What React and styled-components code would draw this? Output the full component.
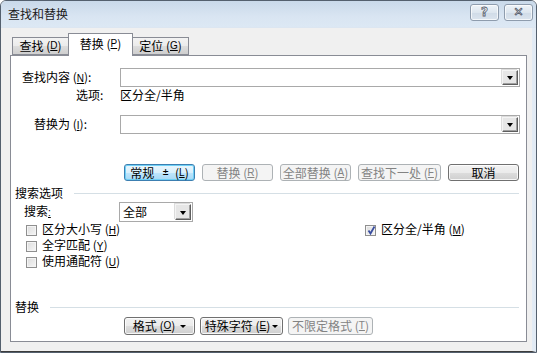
import React from "react";
import styled, { createGlobalStyle, css } from "styled-components";

const Global = createGlobalStyle`
  html, body { margin: 0; padding: 0; background: #ffffff; }
  body { font-family: "Noto Sans CJK SC", "Liberation Sans", sans-serif; font-size: 12px; color: #000; }
  * { box-sizing: border-box; }
`;

const Window = styled.div`
  width: 537px;
  height: 353px;
  border: 1px solid #54606e;
  border-radius: 6px 6px 0 0;
  background: #f0f0f0;
  display: flex;
  flex-direction: column;
  overflow: hidden;
`;

const TitleBar = styled.div`
  height: 27px;
  flex: none;
  display: flex;
  align-items: center;
  justify-content: space-between;
  padding: 0 3px 0 7px;
  background: linear-gradient(#c9d9ea, #d9e5f2 60%, #dce8f4);
  border-bottom: 1px solid #dce6f1;
`;

const Title = styled.span`
  font-size: 12px;
  line-height: 14px;
  color: #1b1b1b;
`;

const Controls = styled.div`
  display: flex;
  gap: 5px;
  margin-top: -4px;
`;

const CtrlBtn = styled.div`
  width: 29px;
  height: 17px;
  border: 1px solid #8e9cad;
  border-radius: 3px;
  background: linear-gradient(#eef3f8, #dde6ef 50%, #d0dbe7 51%, #dbe4ee);
  box-shadow: inset 0 0 0 1px rgba(255,255,255,0.7);
  display: flex;
  align-items: center;
  justify-content: center;
  font-family: "DejaVu Sans", sans-serif;
  font-weight: bold;
  font-size: 12px;
  color: #f4f6f9;
  -webkit-text-stroke: 0.8px #5a6270;
`;

const Client = styled.div`
  flex: 1;
  display: flex;
  flex-direction: column;
  padding: 4px 5px 9px 9px;
  border-right: 4px solid #e2ebf5;
  border-bottom: 1px solid #3c3c3c;
`;

const TabStrip = styled.div`
  display: flex;
  align-items: flex-end;
  padding-left: 2px;
  height: 23px;
  position: relative;
  z-index: 1;
`;

const Tab = styled.div`
  height: ${(p) => (p.$active ? "23px" : "18px")};
  width: ${(p) => p.$w}px;
  border: 1px solid #898c95;
  border-bottom: ${(p) => (p.$active ? "none" : "1px solid #898c95")};
  margin-left: ${(p) => (p.$active ? "-1px" : "0")};
  margin-right: ${(p) => (p.$active ? "-1px" : "0")};
  margin-bottom: ${(p) => (p.$active ? "-1px" : "0")};
  background: ${(p) => (p.$active ? "#ffffff" : "linear-gradient(#f3f3f3, #ebebeb 50%, #dddddd 51%, #cfcfcf)")};
  display: flex;
  align-items: ${(p) => (p.$active ? "flex-start" : "center")};
  justify-content: center;
  padding-top: ${(p) => (p.$active ? "3px" : "0")};
  font-size: 12px;
  line-height: 14px;
  z-index: ${(p) => (p.$active ? 2 : 1)};
  position: relative;
`;

const Panel = styled.div`
  flex: 1;
  border: 1px solid #898c95;
  background: #ffffff;
  display: flex;
  flex-direction: column;
`;

const FieldRow = styled.div`
  display: flex;
  align-items: center;
  height: 19px;
  margin-top: ${(p) => p.$mt}px;
  padding-right: 6px;
`;

const FieldLabel = styled.div`
  width: 109px;
  flex: none;
  padding-left: ${(p) => p.$indent}px;
  line-height: 14px;
  white-space: nowrap;
`;

const Acc = styled.span`
  font-family: "Liberation Sans", sans-serif;
  font-size: 10px;
  text-decoration: underline;
  text-underline-offset: 1px;
`;

const Combo = styled.div`
  flex: 1;
  height: 19px;
  border: 1px solid #a9a9a9;
  background: #fff;
  display: flex;
  justify-content: flex-end;
  align-items: stretch;
  padding: 1px;
`;

const DropBtn = styled.div`
  width: 16px;
  border: 1px solid #5e5e5e;
  border-top-color: #f4f4f4;
  border-left-color: #f4f4f4;
  box-shadow: inset -1px -1px 0 #a0a0a0, -1px -1px 0 #dcdcdc;
  background: #e6e6e6;
  display: flex;
  align-items: center;
  justify-content: center;
  &::after {
    content: "";
    border-left: 3.5px solid transparent;
    border-right: 3.5px solid transparent;
    border-top: 4px solid #000;
    margin-top: 1px;
  }
`;

const OptionLine = styled.div`
  display: flex;
  margin-top: 1px;
  line-height: 14px;
  height: 14px;
`;

const OptionKey = styled.div`
  width: 109px;
  flex: none;
  padding-left: 65px;
`;

const ButtonRow = styled.div`
  display: flex;
  justify-content: flex-end;
  gap: ${(p) => p.$gap || 7}px;
  padding-right: ${(p) => p.$pr || 7}px;
  margin-top: ${(p) => p.$mt || 0}px;
`;

const Button = styled.div`
  width: ${(p) => p.$w}px;
  height: ${(p) => p.$h || 17}px;
  border: 1px solid #707070;
  border-radius: 3px;
  background: linear-gradient(#f2f2f2, #ebebeb 50%, #dddddd 51%, #cfcfcf);
  box-shadow: inset 0 0 0 1px rgba(255,255,255,0.8);
  display: flex;
  align-items: center;
  justify-content: center;
  font-size: 12px;
  line-height: 14px;
  white-space: nowrap;
  color: #000;
  ${(p) =>
    p.$default &&
    css`
      border-color: #3c7fb1;
      background: linear-gradient(#eaf6fd, #d9f0fc 50%, #bee6fd 51%, #a7d9f5);
      box-shadow: inset 0 0 0 1px #6fd0f6;
    `}
  ${(p) =>
    p.$disabled &&
    css`
      border-color: #adb2b5;
      background: #f4f4f4;
      box-shadow: none;
      color: #838383;
    `}
`;

const SmallMark = styled.span`
  font-family: "DejaVu Sans", sans-serif;
  font-size: 8px;
  margin: 0 6px 0 8px;
  font-weight: bold;
`;

const Caret = styled.span`
  display: inline-block;
  margin-left: ${(p) => p.$ml ?? 5}px;
  border-left: 3px solid transparent;
  border-right: 3px solid transparent;
  border-top: 3px solid #000;
  vertical-align: middle;
`;

const SectionHead = styled.div`
  display: flex;
  align-items: center;
  gap: 11px;
  padding: 0 7px 0 4px;
  margin-top: ${(p) => p.$mt || 0}px;
  line-height: 14px;
  height: 14px;
  &::after {
    content: "";
    flex: 1;
    height: 1px;
    background: #d5dfe5;
  }
`;

const SearchRow = styled.div`
  display: flex;
  align-items: center;
  margin-top: 2px;
  height: 20px;
`;

const SearchLabel = styled.div`
  width: 108px;
  padding-left: 13px;
  line-height: 14px;
`;

const Select = styled.div`
  width: 74px;
  height: 20px;
  border: 1px solid #a9a9a9;
  background: #fff;
  display: flex;
  align-items: stretch;
  padding: 1px;
  & > span {
    flex: 1;
    padding-left: 2px;
    line-height: 16px;
  }
`;

const CheckGrid = styled.div`
  display: grid;
  grid-template-columns: 339px 1fr;
  grid-auto-rows: 16px;
  padding-left: 15px;
`;

const CheckItem = styled.label`
  display: flex;
  align-items: center;
  gap: 5px;
  line-height: 14px;
  white-space: nowrap;
`;

const Box = styled.span`
  width: 11px;
  height: 11px;
  border: 1px solid #8f8f8f;
  background: linear-gradient(135deg, #dcdcdc, #f6f6f6);
  box-shadow: inset 0 0 0 1px #f4f4f4;
  position: relative;
  flex: none;
`;

const Tick = styled.svg`
  position: absolute;
  left: 0;
  top: -1px;
`;

const Spacer = styled.div`
  flex: 1;
`;

const BottomGap = styled.div`
  height: 6px;
  flex: none;
`;

const Accel = ({ k }) => (
  <>
    {" "}(<Acc>{k}</Acc>)
  </>
);

const Check = ({ checked, children }) => (
  <CheckItem>
    <Box>
      {checked && (
        <Tick width="11" height="11" viewBox="0 0 11 11">
          <path d="M2.5 5.5 L4.5 8.5 L8.5 1.5" fill="none" stroke="#3b4fa0" strokeWidth="1.8" />
        </Tick>
      )}
    </Box>
    <span>{children}</span>
  </CheckItem>
);

export default function App() {
  return (
    <>
      <Global />
      <Window>
        <TitleBar>
          <Title>查找和替换</Title>
          <Controls>
            <CtrlBtn>?</CtrlBtn>
            <CtrlBtn>✕</CtrlBtn>
          </Controls>
        </TitleBar>
        <Client>
          <TabStrip>
            <Tab $w={57}>查找<Accel k="D" /></Tab>
            <Tab $w={65} $active>替换<Accel k="P" /></Tab>
            <Tab $w={57}>定位<Accel k="G" /></Tab>
          </TabStrip>
          <Panel>
            <FieldRow $mt={12}>
              <FieldLabel $indent={11}>查找内容<Accel k="N" />:</FieldLabel>
              <Combo><DropBtn /></Combo>
            </FieldRow>
            <OptionLine>
              <OptionKey>选项:</OptionKey>
              <span>区分全/半角</span>
            </OptionLine>
            <FieldRow $mt={13}>
              <FieldLabel $indent={23}>替换为<Accel k="I" />:</FieldLabel>
              <Combo><DropBtn /></Combo>
            </FieldRow>
            <ButtonRow $mt={30}>
              <Button $w={71} $default>常规<SmallMark>±</SmallMark>(<Acc>L</Acc>)</Button>
              <Button $w={71} $disabled>替换<Accel k="R" /></Button>
              <Button $w={71} $disabled>全部替换<Accel k="A" /></Button>
              <Button $w={83} $disabled>查找下一处<Accel k="F" /></Button>
              <Button $w={71}>取消</Button>
            </ButtonRow>
            <SectionHead $mt={5}>搜索选项</SectionHead>
            <SearchRow>
              <SearchLabel>搜索<Acc>:</Acc></SearchLabel>
              <Select>
                <span>全部</span>
                <DropBtn />
              </Select>
            </SearchRow>
            <CheckGrid>
              <Check>区分大小写<Accel k="H" /></Check>
              <Check checked>区分全/半角<Accel k="M" /></Check>
              <Check>全字匹配<Accel k="Y" /></Check>
              <span />
              <Check>使用通配符<Accel k="U" /></Check>
            </CheckGrid>
            <Spacer />
            <SectionHead>替换</SectionHead>
            <ButtonRow $mt={3} $pr={153} $gap={5}>
              <Button $w={71} $h={18}>格式<Accel k="O" /><Caret /></Button>
              <Button $w={83} $h={18}>特殊字符<Accel k="E" /><Caret $ml={2} /></Button>
              <Button $w={85} $h={18} $disabled>不限定格式<Accel k="T" /></Button>
            </ButtonRow>
            <BottomGap />
          </Panel>
        </Client>
      </Window>
    </>
  );
}
